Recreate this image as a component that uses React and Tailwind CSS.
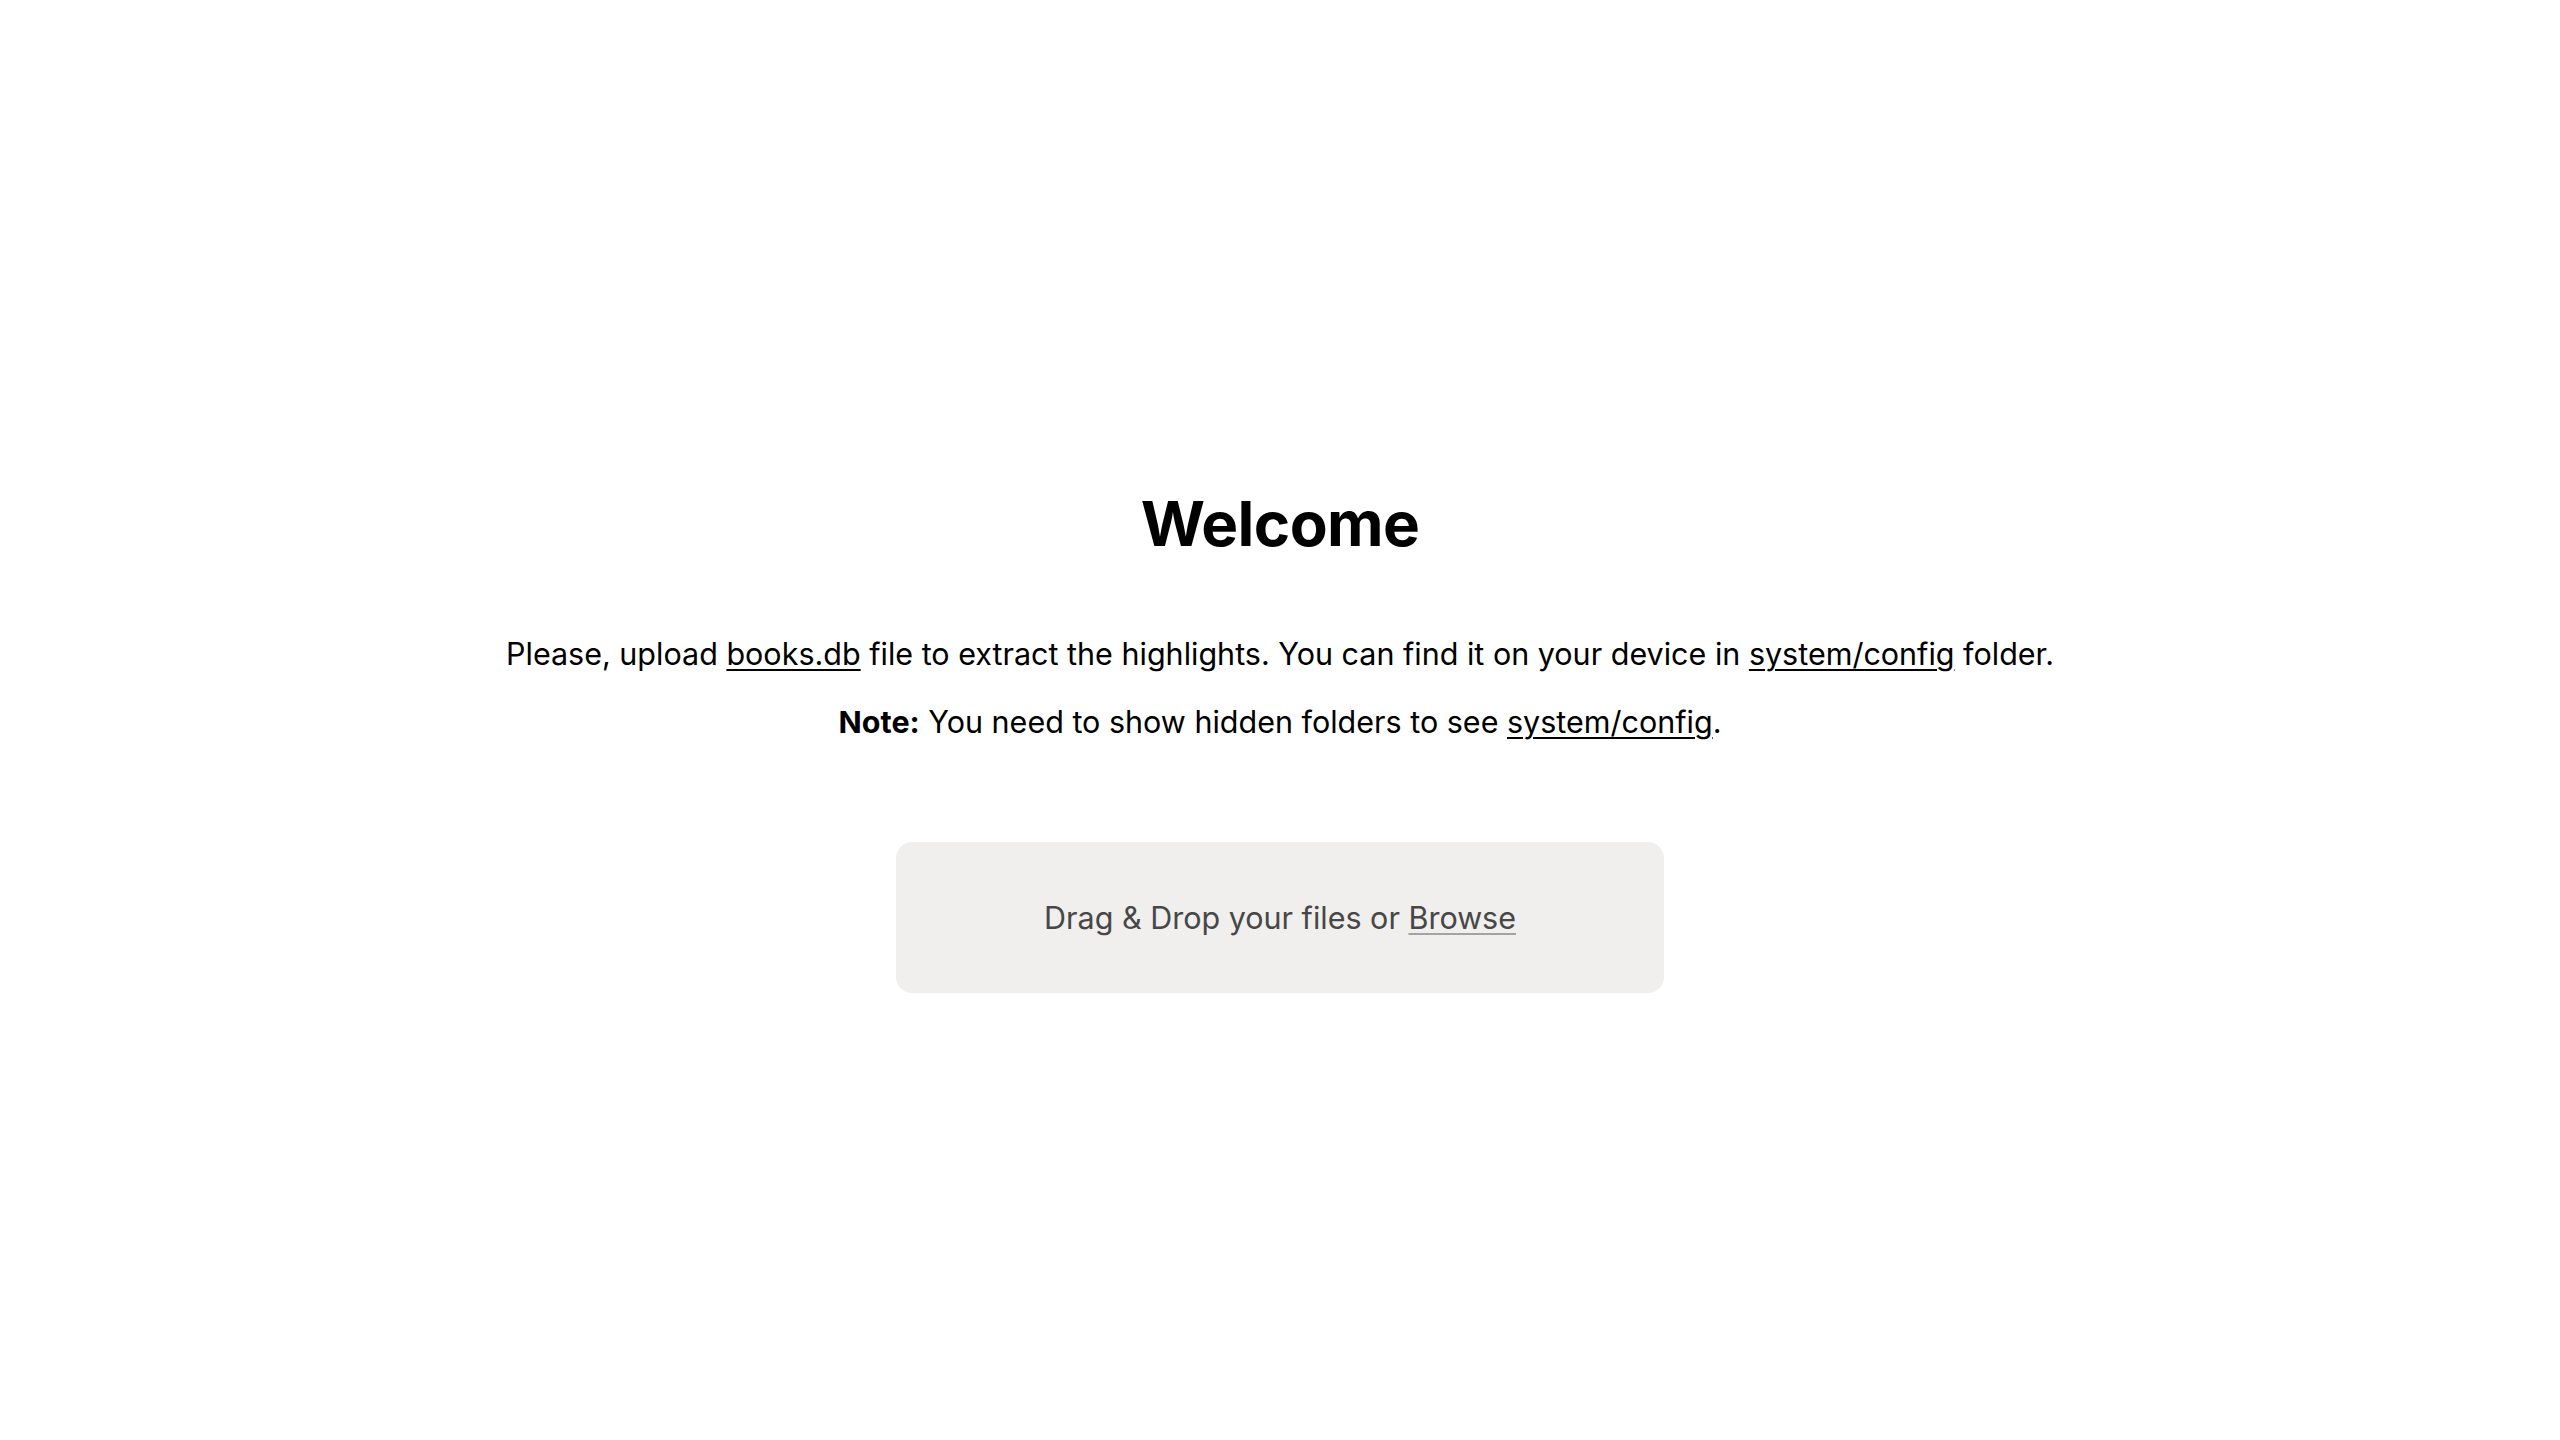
const Link = ({ children, className = '' }) => (
  <a href="#" className={`underline underline-offset-[4px] decoration-[2px] ${className}`}>
    {children}
  </a>
);

export default function App() {
  return (
    <main
      className="flex min-h-screen flex-col items-center justify-center bg-white pt-[46px] text-black"
      style={{ fontFamily: 'Inter, "Noto Sans", sans-serif' }}
    >
      <h1 className="text-[62px] font-bold leading-none tracking-[-0.01em]">Welcome</h1>

      <p className="mt-[79px] text-[30.5px] leading-[40px]">
        Please, upload <Link>books.db</Link> file to extract the highlights. You can find it on your
        device in <Link>system/config</Link> folder.
      </p>
      <p className="mt-[28px] text-[30.5px] leading-[40px]">
        <strong className="font-bold">Note:</strong> You need to show hidden folders to see{' '}
        <Link>system/config</Link>.
      </p>

      <div className="mt-[100px] flex h-[151px] w-[768px] items-center justify-center rounded-2xl bg-[#f0efed]">
        <span className="text-[30.5px] text-[#474747]">
          Drag &amp; Drop your files or <Link className="decoration-[#a3a3a3]">Browse</Link>
        </span>
      </div>
    </main>
  );
}
